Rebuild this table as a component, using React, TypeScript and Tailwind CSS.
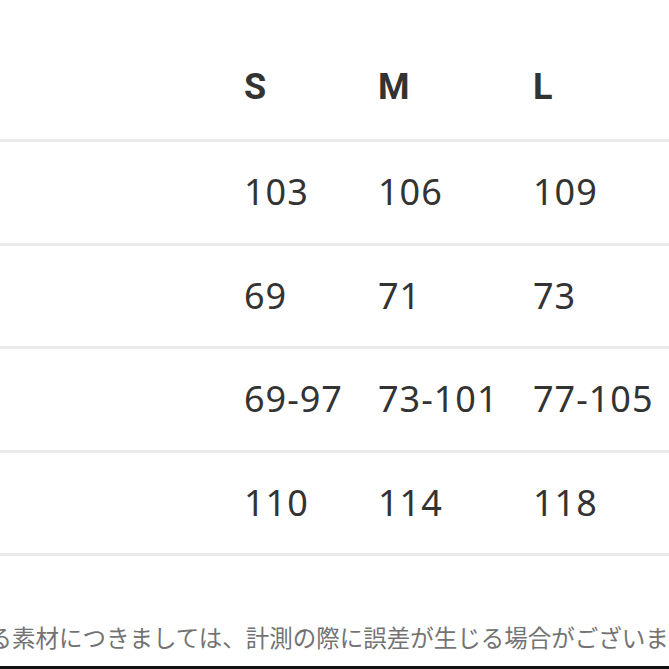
import React from 'react';

const sizes = ['S', 'M', 'L'];

const rows = [
  ['103', '106', '109'],
  ['69', '71', '73'],
  ['69-97', '73-101', '77-105'],
  ['110', '114', '118'],
];

const colWidths = ['w-[134px]', 'w-[155px]', 'flex-1'];

const App = () => {
  return (
    <div className="w-[669px] h-[669px] bg-white overflow-hidden flex flex-col text-[#333333] font-['Roboto','Noto_Sans_CJK_JP',sans-serif]">
      {/* Header */}
      <div className="h-[142px] border-b-[3px] border-[#ebebeb] flex items-center pt-[34px] pl-[244px] shrink-0">
        {sizes.map((s, i) => (
          <div key={s} className={`${colWidths[i]} text-[36px] font-bold leading-none`}>
            {s}
          </div>
        ))}
      </div>

      {/* Rows */}
      {rows.map((row, r) => (
        <div
          key={r}
          className="h-[103.5px] border-b-[3px] border-[#ebebeb] flex items-center pl-[244px] shrink-0"
        >
          {row.map((v, i) => (
            <div
              key={i}
              className={`${colWidths[i]} text-[36px] leading-none whitespace-nowrap tracking-[1px] font-['Noto_Sans',sans-serif]`}
            >
              {v}
            </div>
          ))}
        </div>
      ))}

      {/* Note */}
      <div className="flex-1 flex items-end pb-[17px] overflow-hidden">
        <p className="-ml-[35px] whitespace-nowrap text-[23.5px] leading-none text-[#737373] font-['Noto_Sans_CJK_JP',sans-serif]">
          ある素材につきましては、計測の際に誤差が生じる場合がございます。
        </p>
      </div>
      <div className="h-[3px] bg-[#111111] shrink-0" />
    </div>
  );
};

export default App;
